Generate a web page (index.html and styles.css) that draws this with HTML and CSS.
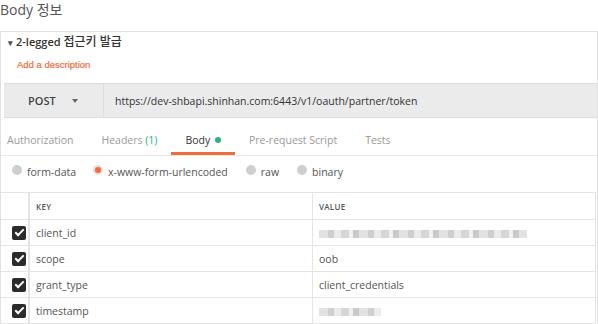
FILE: index.html
```html
<!DOCTYPE html>
<html lang="ko">
<head>
  <meta charset="UTF-8" />
  <meta name="viewport" content="width=device-width, initial-scale=1.0" />
  <title>Body 정보</title>
  <link rel="stylesheet" href="styles.css">
</head>
<body>
  <h2 class="page-title">Body 정보</h2>

  <div class="panel">
    <div class="req-name"><span class="caret">&#9662;</span>2-legged <span class="req-name-ko">접근키 발급</span></div>
    <div class="req-desc">Add a description</div>

    <div class="url-bar">
      <div class="method">POST <span class="method-arrow"></span></div>
      <div class="url">https://dev-shbapi.shinhan.com:6443/v1/oauth/partner/token</div>
    </div>

    <div class="tabs">
      <div class="tab first">Authorization</div>
      <div class="tab">Headers <span class="count">(1)</span></div>
      <div class="tab active">Body <span class="dot"></span></div>
      <div class="tab">Pre-request Script</div>
      <div class="tab">Tests</div>
    </div>

    <div class="body-types">
      <label class="radio"><span class="radio-circle"></span>form-data</label>
      <label class="radio"><span class="radio-circle checked"></span>x-www-form-urlencoded</label>
      <label class="radio"><span class="radio-circle"></span>raw</label>
      <label class="radio"><span class="radio-circle"></span>binary</label>
    </div>

    <table class="params">
      <thead>
        <tr>
          <th class="col-check"></th>
          <th class="col-key">KEY</th>
          <th class="col-value">VALUE</th>
        </tr>
      </thead>
      <tbody>
        <tr>
          <td class="col-check"><span class="checkbox"></span></td>
          <td>client_id</td>
          <td><span class="masked masked-long"></span></td>
        </tr>
        <tr>
          <td class="col-check"><span class="checkbox"></span></td>
          <td>scope</td>
          <td>oob</td>
        </tr>
        <tr>
          <td class="col-check"><span class="checkbox"></span></td>
          <td>grant_type</td>
          <td>client_credentials</td>
        </tr>
        <tr>
          <td class="col-check"><span class="checkbox"></span></td>
          <td>timestamp</td>
          <td><span class="masked masked-short"></span></td>
        </tr>
      </tbody>
    </table>
  </div>
</body>
</html>
```

FILE: styles.css
```css
body {
  margin: 0;
  background: #fff;
  font-family: 'Open Sans', 'Noto Sans CJK KR', sans-serif;
  font-size: 10.5px;
  color: #555;
}

.page-title {
  margin: 0 0 11px;
  font-size: 14px;
  line-height: 20px;
  font-weight: 400;
  color: #555;
}

.panel {
  width: 596px;
  border: 1px solid #e2e2e2;
  border-bottom: none;
}

.req-name {
  padding: 0 7px;
  line-height: 20px;
  font-size: 11px;
  font-weight: 600;
  color: #333;
}

.req-name-ko {
  font-size: 12px;
  font-weight: 500;
}

.caret {
  font-size: 9px;
  color: #555;
  margin-right: 3px;
}

.req-desc {
  margin: 4px 0 10px 16px;
  line-height: 16px;
  font-family: 'Liberation Sans', sans-serif;
  font-size: 9.5px;
  color: #f26b3a;
  -webkit-text-stroke: 0.2px #f26b3a;
}

.url-bar {
  display: flex;
  height: 33px;
  margin-left: 3px;
  background: #ebebeb;
  border-top: 1px solid #dcdcdc;
  border-bottom: 1px solid #dcdcdc;
}

.method {
  display: flex;
  align-items: center;
  width: 100px;
  padding-left: 24px;
  box-sizing: border-box;
  border-right: 1px solid #dcdcdc;
  font-size: 11px;
  font-weight: 600;
  color: #444;
}

.method-arrow {
  margin-left: 16px;
  border-left: 3px solid transparent;
  border-right: 3px solid transparent;
  border-top: 4px solid #666;
}

.url {
  display: flex;
  align-items: center;
  padding-left: 11px;
  color: #333;
}

.tabs {
  display: flex;
  border-bottom: 1px solid #e8e8e8;
}

.tab {
  height: 37px;
  box-sizing: border-box;
  padding: 14px 14px 0;
  line-height: 16px;
  color: #999;
  border-bottom: 3px solid transparent;
}

.tab.first {
  padding-left: 6px;
}

.tab.active {
  color: #333;
  border-bottom-color: #f26b3a;
}

.count {
  color: #26b47f;
}

.dot {
  display: inline-block;
  width: 6px;
  height: 6px;
  margin-left: 2px;
  border-radius: 50%;
  background: #26b47f;
  vertical-align: 1px;
}

.body-types {
  display: flex;
  align-items: flex-start;
  height: 36px;
  padding: 8px 0 0 11px;
  box-sizing: border-box;
  line-height: 16px;
}

.radio {
  display: flex;
  align-items: center;
  margin-right: 18px;
  color: #555;
}

.radio:first-child {
  margin-right: 17px;
}

.radio-circle {
  width: 10px;
  height: 10px;
  margin-right: 5px;
  border-radius: 50%;
  background: #cfcfcf;
  position: relative;
  top: -2px;
}

.radio-circle.checked {
  background: #e0e0e0;
}

.radio-circle.checked::after {
  content: '';
  position: absolute;
  top: 2px;
  left: 2px;
  width: 6px;
  height: 6px;
  border-radius: 50%;
  background: #f26b3a;
}

.params {
  width: 595px;
  border-collapse: collapse;
}

.params th,
.params td {
  height: 25px;
  padding: 0 0 0 6px;
  border: 1px solid #e4e4e4;
  text-align: left;
  color: #555;
}

.params th {
  height: 26px;
  font-size: 8px;
  font-weight: 600;
  letter-spacing: 0.3px;
}

.params tr > :first-child {
  border-left: none;
}

.params .col-check {
  width: 27px;
  padding: 0;
  border-right: 2px solid #e4e4e4;
  text-align: left;
}

.params .col-key {
  width: 276px;
}

.checkbox {
  display: inline-block;
  position: relative;
  width: 14px;
  height: 14px;
  margin-left: 11px;
  border-radius: 2px;
  background: #2b2b2b;
  vertical-align: middle;
}

.checkbox::after {
  content: '';
  position: absolute;
  left: 3px;
  top: 3px;
  width: 7px;
  height: 3px;
  border-left: 2px solid #fff;
  border-bottom: 2px solid #fff;
  transform: rotate(-45deg);
}

.masked {
  display: inline-block;
  height: 8px;
  vertical-align: middle;
  filter: blur(0.6px);
  background: repeating-linear-gradient(90deg,
    #e2e2e2 0 9px, #cfcfcf 9px 15px, #ebebeb 15px 22px,
    #d6d6d6 22px 30px, #f0f0f0 30px 34px, #c9c9c9 34px 40px);
}

.masked-long {
  width: 208px;
}

.masked-short {
  width: 62px;
}
```
